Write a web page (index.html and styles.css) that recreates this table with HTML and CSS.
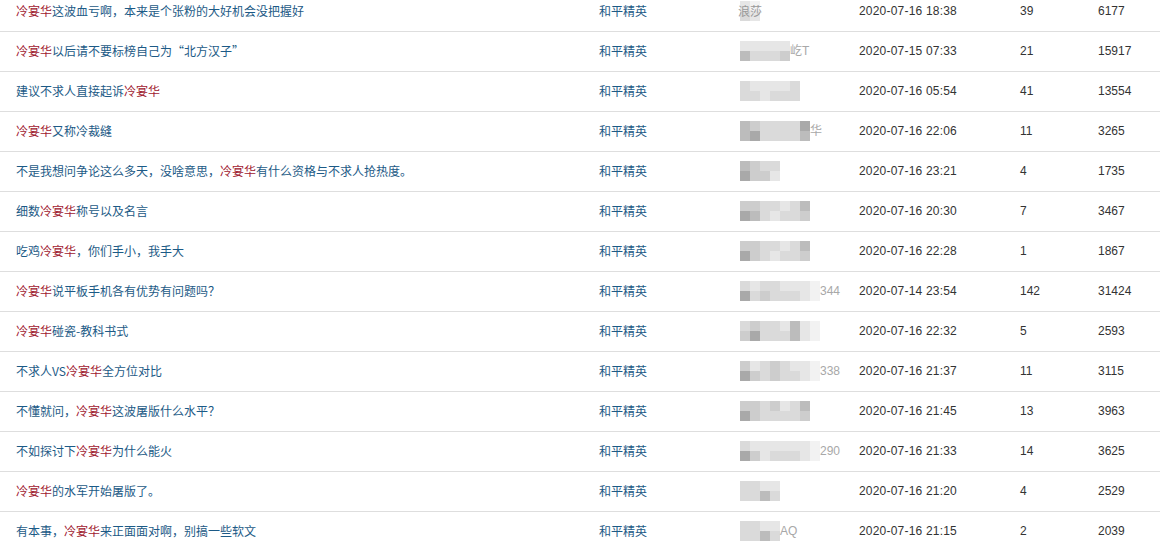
FILE: index.html
```html
<!DOCTYPE html>
<html lang="zh-CN">
<head>
<meta charset="utf-8">
<title>帖子列表</title>
<link rel="stylesheet" href="styles.css">
</head>
<body>
<div class="list">
  <div class="row">
    <div class="title"><span class="hl">冷宴华</span>这波血亏啊，本来是个张粉的大好机会没把握好</div>
    <div class="game">和平精英</div>
    <div class="author"><span class="mz"><i class="e"></i><i class="d"></i><i class="f"></i><i class="e"></i></span><span class="tail over">浪莎</span></div>
    <div class="date">2020-07-16 18:38</div>
    <div class="num">39</div>
    <div class="num">6177</div>
  </div>
  <div class="row">
    <div class="title"><span class="hl">冷宴华</span>以后请不要标榜自己为“北方汉子”</div>
    <div class="game">和平精英</div>
    <div class="author"><span class="mz"><i class="e"></i><i class="b"></i><i class="e"></i><i class="d"></i><i class="e"></i><i class="d"></i><i class="e"></i><i class="d"></i><i class="e"></i><i class="c"></i></span><span class="tail">屹T</span></div>
    <div class="date">2020-07-15 07:33</div>
    <div class="num">21</div>
    <div class="num">15917</div>
  </div>
  <div class="row">
    <div class="title">建议不求人直接起诉<span class="hl">冷宴华</span></div>
    <div class="game">和平精英</div>
    <div class="author"><span class="mz"><i class="d"></i><i class="d"></i><i class="e"></i><i class="d"></i><i class="e"></i><i class="e"></i><i class="e"></i><i class="d"></i><i class="e"></i><i class="d"></i><i class="d"></i><i class="d"></i></span></div>
    <div class="date">2020-07-16 05:54</div>
    <div class="num">41</div>
    <div class="num">13554</div>
  </div>
  <div class="row">
    <div class="title"><span class="hl">冷宴华</span>又称冷裁缝</div>
    <div class="game">和平精英</div>
    <div class="author"><span class="mz"><i class="b"></i><i class="b"></i><i class="c"></i><i class="a"></i><i class="d"></i><i class="d"></i><i class="d"></i><i class="d"></i><i class="d"></i><i class="d"></i><i class="d"></i><i class="d"></i><i class="a"></i><i class="b"></i></span><span class="tail">华</span></div>
    <div class="date">2020-07-16 22:06</div>
    <div class="num">11</div>
    <div class="num">3265</div>
  </div>
  <div class="row">
    <div class="title">不是我想问争论这么多天，没啥意思，<span class="hl">冷宴华</span>有什么资格与不求人抢热度。</div>
    <div class="game">和平精英</div>
    <div class="author"><span class="mz"><i class="b"></i><i class="a"></i><i class="c"></i><i class="c"></i><i class="d"></i><i class="c"></i><i class="d"></i><i class="e"></i></span></div>
    <div class="date">2020-07-16 23:21</div>
    <div class="num">4</div>
    <div class="num">1735</div>
  </div>
  <div class="row">
    <div class="title">细数<span class="hl">冷宴华</span>称号以及名言</div>
    <div class="game">和平精英</div>
    <div class="author"><span class="mz"><i class="c"></i><i class="a"></i><i class="c"></i><i class="b"></i><i class="d"></i><i class="d"></i><i class="d"></i><i class="e"></i><i class="e"></i><i class="d"></i><i class="d"></i><i class="d"></i><i class="b"></i><i class="c"></i></span></div>
    <div class="date">2020-07-16 20:30</div>
    <div class="num">7</div>
    <div class="num">3467</div>
  </div>
  <div class="row">
    <div class="title">吃鸡<span class="hl">冷宴华</span>，你们手小，我手大</div>
    <div class="game">和平精英</div>
    <div class="author"><span class="mz"><i class="c"></i><i class="a"></i><i class="c"></i><i class="c"></i><i class="d"></i><i class="d"></i><i class="d"></i><i class="e"></i><i class="e"></i><i class="d"></i><i class="d"></i><i class="d"></i><i class="b"></i><i class="c"></i></span></div>
    <div class="date">2020-07-16 22:28</div>
    <div class="num">1</div>
    <div class="num">1867</div>
  </div>
  <div class="row">
    <div class="title"><span class="hl">冷宴华</span>说平板手机各有优势有问题吗？</div>
    <div class="game">和平精英</div>
    <div class="author"><span class="mz"><i class="d"></i><i class="a"></i><i class="e"></i><i class="d"></i><i class="d"></i><i class="c"></i><i class="d"></i><i class="d"></i><i class="e"></i><i class="d"></i><i class="e"></i><i class="d"></i><i class="e"></i><i class="e"></i><i class="f"></i><i class="f"></i></span><span class="tail">344</span></div>
    <div class="date">2020-07-14 23:54</div>
    <div class="num">142</div>
    <div class="num">31424</div>
  </div>
  <div class="row">
    <div class="title"><span class="hl">冷宴华</span>碰瓷-教科书式</div>
    <div class="game">和平精英</div>
    <div class="author"><span class="mz"><i class="d"></i><i class="c"></i><i class="c"></i><i class="a"></i><i class="d"></i><i class="d"></i><i class="d"></i><i class="d"></i><i class="e"></i><i class="d"></i><i class="b"></i><i class="b"></i><i class="e"></i><i class="e"></i><i class="f"></i><i class="f"></i></span></div>
    <div class="date">2020-07-16 22:32</div>
    <div class="num">5</div>
    <div class="num">2593</div>
  </div>
  <div class="row">
    <div class="title">不求人VS<span class="hl">冷宴华</span>全方位对比</div>
    <div class="game">和平精英</div>
    <div class="author"><span class="mz"><i class="c"></i><i class="a"></i><i class="e"></i><i class="c"></i><i class="d"></i><i class="d"></i><i class="c"></i><i class="c"></i><i class="d"></i><i class="d"></i><i class="e"></i><i class="d"></i><i class="e"></i><i class="e"></i><i class="f"></i><i class="f"></i></span><span class="tail">338</span></div>
    <div class="date">2020-07-16 21:37</div>
    <div class="num">11</div>
    <div class="num">3115</div>
  </div>
  <div class="row">
    <div class="title">不懂就问，<span class="hl">冷宴华</span>这波屠版什么水平？</div>
    <div class="game">和平精英</div>
    <div class="author"><span class="mz"><i class="c"></i><i class="a"></i><i class="c"></i><i class="c"></i><i class="d"></i><i class="d"></i><i class="c"></i><i class="d"></i><i class="e"></i><i class="d"></i><i class="d"></i><i class="d"></i><i class="b"></i><i class="c"></i></span></div>
    <div class="date">2020-07-16 21:45</div>
    <div class="num">13</div>
    <div class="num">3963</div>
  </div>
  <div class="row">
    <div class="title">不如探讨下<span class="hl">冷宴华</span>为什么能火</div>
    <div class="game">和平精英</div>
    <div class="author"><span class="mz"><i class="d"></i><i class="a"></i><i class="e"></i><i class="c"></i><i class="e"></i><i class="e"></i><i class="e"></i><i class="d"></i><i class="e"></i><i class="d"></i><i class="e"></i><i class="d"></i><i class="e"></i><i class="e"></i><i class="f"></i><i class="f"></i></span><span class="tail">290</span></div>
    <div class="date">2020-07-16 21:33</div>
    <div class="num">14</div>
    <div class="num">3625</div>
  </div>
  <div class="row">
    <div class="title"><span class="hl">冷宴华</span>的水军开始屠版了。</div>
    <div class="game">和平精英</div>
    <div class="author"><span class="mz"><i class="d"></i><i class="d"></i><i class="d"></i><i class="d"></i><i class="e"></i><i class="b"></i><i class="e"></i><i class="d"></i></span></div>
    <div class="date">2020-07-16 21:20</div>
    <div class="num">4</div>
    <div class="num">2529</div>
  </div>
  <div class="row">
    <div class="title">有本事，<span class="hl">冷宴华</span>来正面面对啊，别搞一些软文</div>
    <div class="game">和平精英</div>
    <div class="author"><span class="mz"><i class="d"></i><i class="d"></i><i class="d"></i><i class="d"></i><i class="e"></i><i class="b"></i><i class="e"></i><i class="d"></i></span><span class="tail">AQ</span></div>
    <div class="date">2020-07-16 21:15</div>
    <div class="num">2</div>
    <div class="num">2039</div>
  </div>
</div>
</body>
</html>
```

FILE: styles.css
```css
html, body {
  margin: 0;
  padding: 0;
  background: #ffffff;
}

body {
  font-family: "Liberation Sans", Arial, "Noto Sans CJK SC", sans-serif;
  font-size: 12px;
  color: #333333;
  overflow: hidden;
}

.list {
  width: 1160px;
  margin-top: -8px;
}

.row {
  display: grid;
  grid-template-columns: 599px 141px 119px 161px 78px 1fr;
  align-items: center;
  box-sizing: border-box;
  height: 40px;
  padding-bottom: 2px;
  border-bottom: 1px solid #dedede;
}

.title {
  padding-left: 16px;
  color: #1c5a86;
  white-space: nowrap;
  font-family: "Noto Sans CJK SC", sans-serif;
}

.hl {
  color: #a0202f;
}

.game {
  color: #1c5a86;
  font-family: "Noto Sans CJK SC", sans-serif;
}

.author {
  display: flex;
  align-items: center;
  height: 20px;
}

.mz {
  display: grid;
  grid-template-rows: 10px 10px;
  grid-auto-flow: column;
  grid-auto-columns: 10px;
}

.mz i {
  display: block;
}

.mz .a { background: #a9a9a9; }
.mz .b { background: #bcbcbc; }
.mz .c { background: #cdcdcd; }
.mz .d { background: #dadada; }
.mz .e { background: #e6e6e6; }
.mz .f { background: #f2f2f2; }

.tail {
  color: #a8a8a8;
  line-height: 20px;
}

.tail.over {
  color: #999999;
  margin-left: -22px;
  font-family: "Noto Sans CJK SC", sans-serif;
}

.date {
  letter-spacing: 0.2px;
  color: #333333;
}

.num {
  color: #333333;
}
```
